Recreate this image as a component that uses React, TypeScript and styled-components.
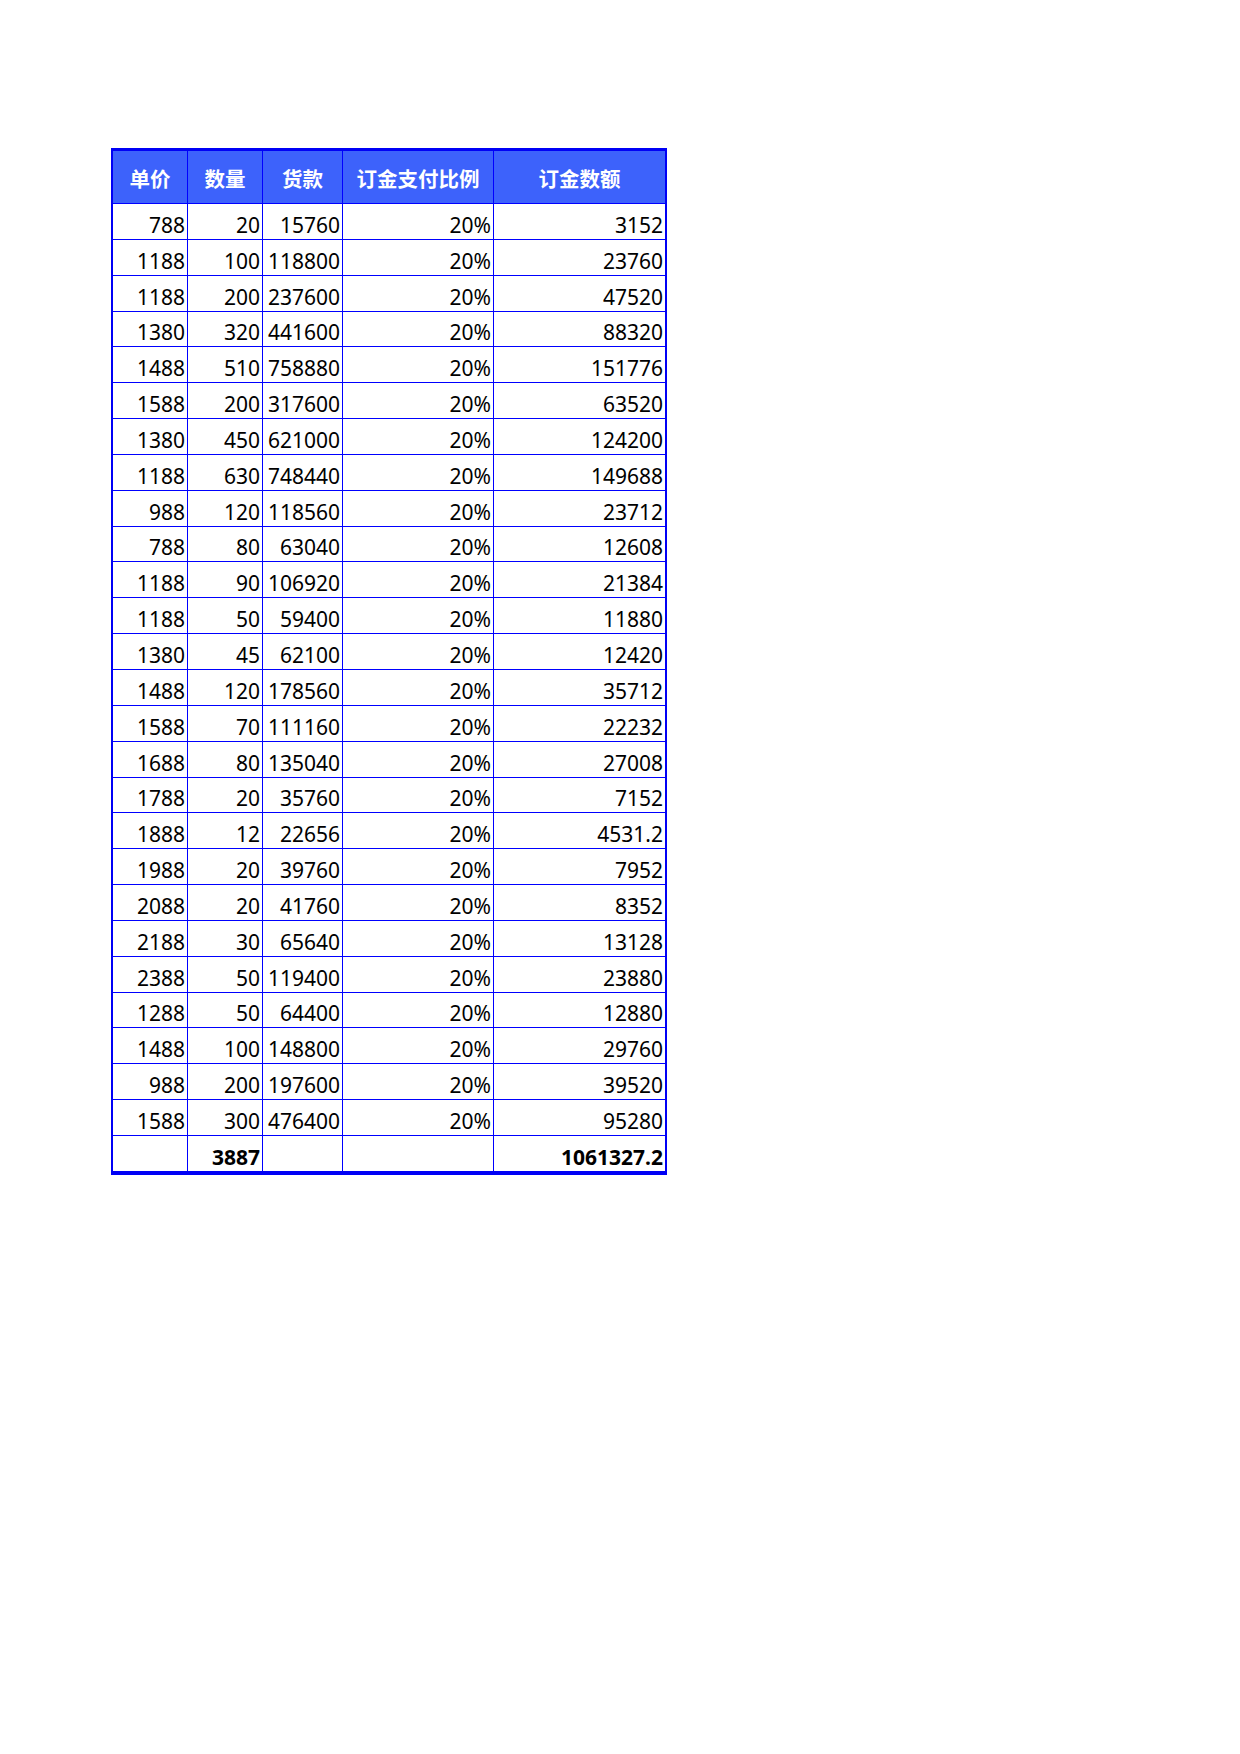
import React from 'react';
import styled, { createGlobalStyle } from 'styled-components';

const GlobalStyle = createGlobalStyle`
  html, body {
    margin: 0;
    padding: 0;
    background: #fff;
  }
  body {
    font-family: "Noto Sans", "Noto Sans CJK SC", sans-serif;
  }
`;

const Page = styled.div`
  width: 1240px;
  min-height: 1754px;
  padding: 148px 0 0 111px;
  box-sizing: border-box;
  background: #fff;
`;

const Sheet = styled.div`
  display: inline-grid;
  grid-template-columns: 74px 74px 79px 150px 171px;
  grid-template-rows: 52px;
  grid-auto-rows: 34.85px;
  column-gap: 1px;
  row-gap: 1px;
  background: #0000ff;
  border-style: solid;
  border-color: #0000f5;
  border-width: 3px 2px 4px 2px;
`;

const HeadCell = styled.div`
  display: flex;
  align-items: center;
  justify-content: center;
  background: #3d62fb;
  color: #fff;
  font-family: "Noto Sans CJK SC", "Noto Sans", sans-serif;
  font-weight: 700;
  font-size: 20.5px;
  padding-top: 1px;
  box-sizing: border-box;
`;

const Cell = styled.div<{ $bold?: boolean }>`
  display: flex;
  align-items: flex-end;
  justify-content: flex-end;
  background: #fff;
  color: #000;
  font-size: 21px;
  line-height: 1;
  font-weight: ${p => (p.$bold ? 700 : 400)};
  padding: 0 2px 3px 0;
  box-sizing: border-box;
  white-space: nowrap;
`;

const headers = ['单价', '数量', '货款', '订金支付比例', '订金数额'];

const rows: string[][] = [
  ['788', '20', '15760', '20%', '3152'],
  ['1188', '100', '118800', '20%', '23760'],
  ['1188', '200', '237600', '20%', '47520'],
  ['1380', '320', '441600', '20%', '88320'],
  ['1488', '510', '758880', '20%', '151776'],
  ['1588', '200', '317600', '20%', '63520'],
  ['1380', '450', '621000', '20%', '124200'],
  ['1188', '630', '748440', '20%', '149688'],
  ['988', '120', '118560', '20%', '23712'],
  ['788', '80', '63040', '20%', '12608'],
  ['1188', '90', '106920', '20%', '21384'],
  ['1188', '50', '59400', '20%', '11880'],
  ['1380', '45', '62100', '20%', '12420'],
  ['1488', '120', '178560', '20%', '35712'],
  ['1588', '70', '111160', '20%', '22232'],
  ['1688', '80', '135040', '20%', '27008'],
  ['1788', '20', '35760', '20%', '7152'],
  ['1888', '12', '22656', '20%', '4531.2'],
  ['1988', '20', '39760', '20%', '7952'],
  ['2088', '20', '41760', '20%', '8352'],
  ['2188', '30', '65640', '20%', '13128'],
  ['2388', '50', '119400', '20%', '23880'],
  ['1288', '50', '64400', '20%', '12880'],
  ['1488', '100', '148800', '20%', '29760'],
  ['988', '200', '197600', '20%', '39520'],
  ['1588', '300', '476400', '20%', '95280'],
];

const totals = ['', '3887', '', '', '1061327.2'];

const App: React.FC = () => {
  return (
    <>
      <GlobalStyle />
      <Page>
        <Sheet>
          {headers.map(h => (
            <HeadCell key={h}>{h}</HeadCell>
          ))}
          {rows.map((row, i) =>
            row.map((v, j) => <Cell key={i + '-' + j}>{v}</Cell>)
          )}
          {totals.map((v, j) => (
            <Cell key={'t' + j} $bold>{v}</Cell>
          ))}
        </Sheet>
      </Page>
    </>
  );
};

export default App;
